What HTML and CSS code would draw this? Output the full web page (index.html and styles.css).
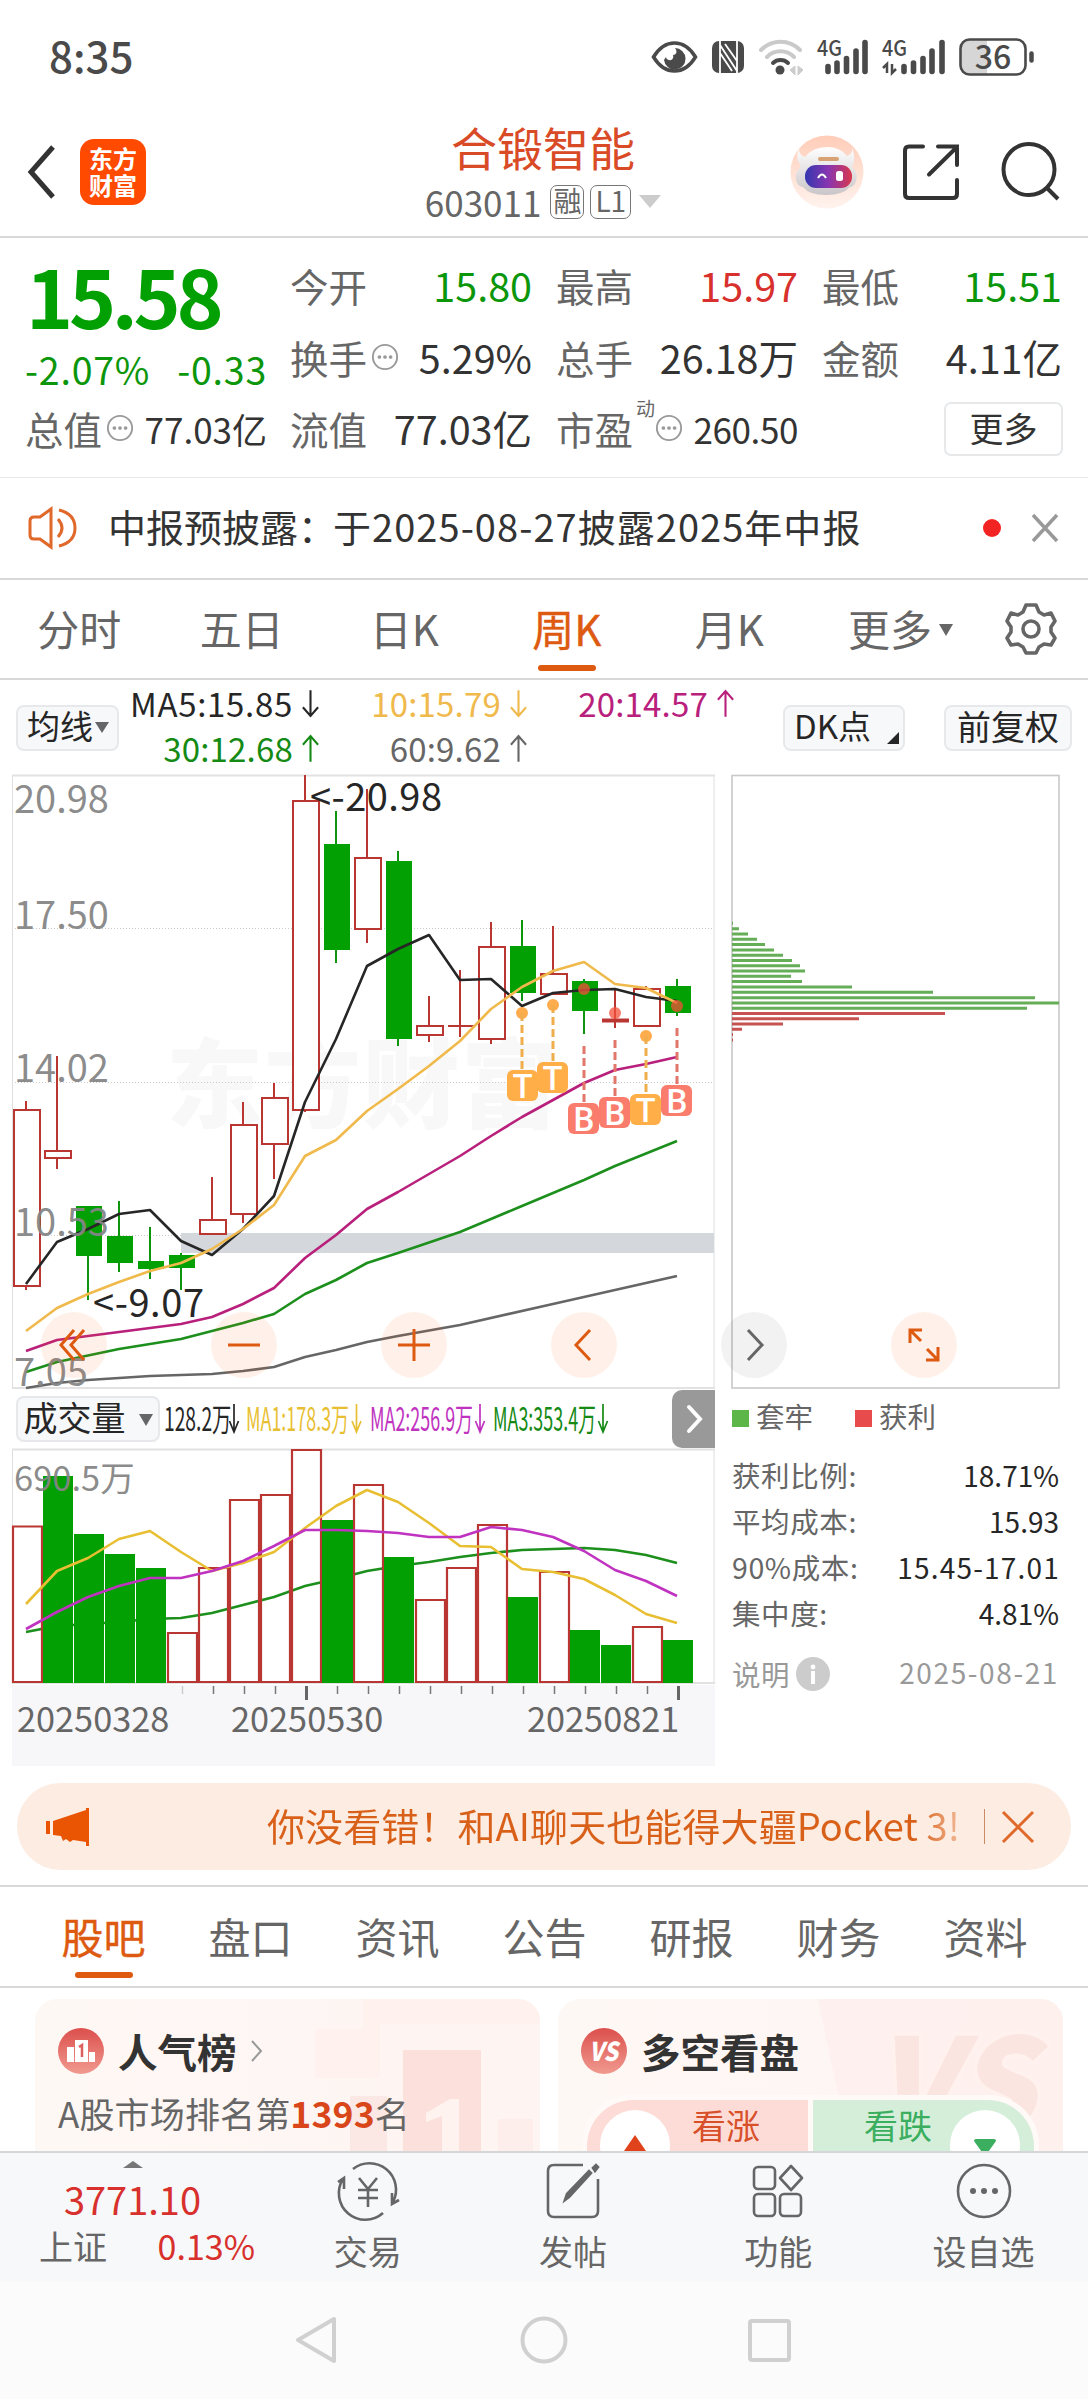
FILE: index.html
```html
<!DOCTYPE html>
<html lang="zh-CN">
<head>
<meta charset="utf-8">
<title>合锻智能 603011</title>
<link rel="stylesheet" href="styles.css">
</head>
<body>
<svg class="defs" width="0" height="0" aria-hidden="true">
  <symbol id="up" viewBox="0 0 20 30"><path d="M10 29V2M2 11L10 2l8 9" fill="none" stroke="currentColor" stroke-width="2.2"/></symbol>
  <symbol id="down" viewBox="0 0 20 30"><path d="M10 1v27M2 19l8 9 8-9" fill="none" stroke="currentColor" stroke-width="2.2"/></symbol>
  <symbol id="more" viewBox="0 0 30 30"><circle cx="15" cy="15" r="13" fill="none" stroke="#999" stroke-width="2"/><g fill="#999"><circle cx="9" cy="15" r="2"/><circle cx="15" cy="15" r="2"/><circle cx="21" cy="15" r="2"/></g></symbol>
</svg>

<div class="status">
  <span class="clock">8:35</span>
  <svg width="384" height="44" viewBox="652 35 384 44">
    <path d="M653.500 56C659 47 666 42 674.500 42s15.500 5 21 14c-5.500 9-12.500 14-21 14s-15.500-5-21-14z" fill="none" stroke="#4a4a4a" stroke-width="3.500"/>
    <path d="M675 47c3 4 1 7-2 7 1 3-1 6-4 5-1 0-3-1-3-3l-2 3a10.800 10.800 0 1 0 11-12z" fill="#4a4a4a"/>
    <rect x="712" y="40" width="32" height="32" rx="7" fill="#4a4a4a"/>
    <path d="M720 39V73M737 39V73M720 44L737 70M720 52L732 70M725 43L737 60" fill="none" stroke="#fff" stroke-width="1.800"/>
    <g fill="none" stroke-linecap="round" stroke-width="4">
      <path d="M761 49a27 27 0 0 1 39 0M767 56a19 19 0 0 1 27 0" stroke="#cacaca"/>
      <path d="M773 62a11 11 0 0 1 15 0" stroke="#4a4a4a"/>
    </g>
    <circle cx="780" cy="69" r="4.500" fill="#4a4a4a"/>
    <path d="M795 65v9l-5-5zM798 65v9l5-5z" fill="#ccc" stroke="#ccc"/>
    <g stroke="#4a4a4a" stroke-width="5.600" stroke-linecap="round">
      <path d="M828 65.500v5M837 62v8.500M846.500 57.500v13M856 50v20.500M865 41.500v29"/>
      <path d="M904 65.500v5M913.500 62v8.500M923 57.500v13M932 50v20.500M942 41.500v29"/>
    </g>
    <path d="M887 72V63l-4 4M892 63v9l4-4" fill="none" stroke="#4a4a4a" stroke-width="2.500"/>
    <g class="cjk" font-size="22" font-weight="500" fill="#4a4a4a">
      <text x="817" y="55" textLength="25" lengthAdjust="spacingAndGlyphs">4G</text>
      <text x="882" y="55" textLength="25" lengthAdjust="spacingAndGlyphs">4G</text>
    </g>
    <path d="M961 47q0-8 8-8h18v34h-18q-8 0-8-8z" fill="#d6d6d6"/>
    <rect x="960.500" y="38.500" width="65" height="35" rx="9" fill="none" stroke="#4a4a4a" stroke-width="2.600"/>
    <path d="M1031.500 52.500v7" stroke="#4a4a4a" stroke-width="4.500" stroke-linecap="round"/>
    <text class="cjk" x="993" y="67.500" font-size="32" font-weight="500" fill="#4a4a4a" text-anchor="middle">36</text>
  </svg>
</div>

<header class="top">
  <svg width="28" height="56" viewBox="0 0 28 56"><path d="M26 3L4 28l22 25" fill="none" stroke="#333" stroke-width="5"/></svg>
  <div class="logo"><span>东方</span><span>财富</span></div>
  <div class="title">
    <h1>合锻智能</h1>
    <div class="code">603011<i>融</i><i>L1</i><b></b></div>
  </div>
  <svg class="tools" width="276" height="80" viewBox="788 132 276 80">
    <defs>
      <linearGradient id="halo" x2="0" y2="1"><stop stop-color="#ffcdb8"/><stop offset="1" stop-color="#fff3ee"/></linearGradient>
      <linearGradient id="shell" x2="0" y2="1"><stop stop-color="#fff"/><stop offset="1" stop-color="#c9c5c8"/></linearGradient>
      <linearGradient id="visor"><stop stop-color="#3338b0"/><stop offset=".5" stop-color="#8a35b0"/><stop offset="1" stop-color="#d8384c"/></linearGradient>
    </defs>
    <circle cx="827" cy="172" r="36.500" fill="url(#halo)"/>
    <path d="M799 149q0 6 6 8 8-10 22-10 13 0 20 9 6-2 5-8 4 9 1 17-2 3 2 5 3 5 1 11-2 6-6 6-7 8-24 8t-23-8q-5 0-7-7-1-7 3-11 3-3-1-8-2-7 1-12z" fill="url(#shell)"/>
    <rect x="818" y="157" width="21" height="4" rx="2" fill="#d9a274"/>
    <rect x="805" y="165" width="47" height="23" rx="11" fill="url(#visor)"/>
    <path d="M818 178q4-7 8 0" fill="none" stroke="#fff" stroke-width="2"/><rect x="836" y="171" width="7" height="10" rx="2.500" fill="#fff"/>
    <path d="M923 146.500H909q-4 0-4 4V194q0 4 4 4h44q4 0 4-4V180M938 146.500H957V165M957 147L929 174.500" fill="none" stroke="#333" stroke-width="4" stroke-linecap="round"/>
    <circle cx="1029" cy="169.500" r="25.500" fill="none" stroke="#333" stroke-width="4"/><path d="M1047 188l11 11" stroke="#333" stroke-width="4"/>
  </svg>
</header>

<section class="quote">
  <div class="price"><strong>15.58</strong><p><span>-2.07%</span><span>-0.33</span></p></div>
  <dl class="c1"><dt>今开</dt><dd class="g">15.80</dd><dt>换手<svg width="28" height="28"><use href="#more"/></svg></dt><dd>5.29%</dd></dl>
  <dl class="c2"><dt>最高</dt><dd class="r">15.97</dd><dt>总手</dt><dd>26.18万</dd></dl>
  <dl class="c3"><dt>最低</dt><dd class="g">15.51</dd><dt>金额</dt><dd>4.11亿</dd></dl>
  <dl class="c0"><dt>总值<svg width="28" height="28"><use href="#more"/></svg></dt><dd class="small">77.03亿</dd></dl>
  <dl class="c1"><dt>流值</dt><dd>77.03亿</dd></dl>
  <dl class="c2"><dt>市盈<sup>动</sup><svg width="28" height="28"><use href="#more"/></svg></dt><dd class="small">260.50</dd></dl>
  <button class="more">更多</button>
</section>

<section class="notice">
  <svg width="50" height="44" viewBox="0 0 50 44"><g fill="none" stroke="#e0682a" stroke-width="3"><path d="M23 3v38L12 33H6q-4 0-4-4V15q0-4 4-4h6z"/><path d="M30 13q8 9 0 18M31 4q16 4 16 18T31 40"/></g></svg>
  <p><span>中报预披露：</span>于2025-08-27披露2025年中报</p>
  <i></i>
  <svg width="28" height="30" viewBox="0 0 28 30"><path d="M2 2l24 26M26 2L2 28" stroke="#999" stroke-width="3.500"/></svg>
</section>

<nav class="period">
  <span>分时</span><span>五日</span><span>日K</span><span class="on">周K</span><span>月K</span><span>更多<b></b></span>
  <svg width="52" height="54" viewBox="-26 -27 52 54"><path d="M-5-24H5L8-17 13-14 20-16 24-8 20-2V3L24 9 20 16 13 15 8 18 5 24H-5L-8 18-13 15-20 16-24 9-20 3V-2L-24-8-20-16-13-14-8-17Z" fill="none" stroke="#666" stroke-width="3.600" stroke-linejoin="round"/><circle r="8" fill="none" stroke="#666" stroke-width="3.600"/></svg>
</nav>

<section class="ma">
  <button>均线<b></b></button>
  <div class="vals">
    <span class="k">MA5:15.85<svg><use href="#down"/></svg></span><span class="y">10:15.79<svg><use href="#down"/></svg></span><span class="m">20:14.57<svg><use href="#up"/></svg></span>
    <span class="gr">30:12.68<svg><use href="#up"/></svg></span><span class="gy">60:9.62<svg><use href="#up"/></svg></span>
  </div>
  <button class="dk">DK点<b></b></button>
  <button class="fq">前复权</button>
</section>

<section class="charts">
  <div class="left">
    <svg class="block" width="722" height="616" viewBox="0 775 722 616">
      <text class="cjk" x="166" y="1121" font-size="97" font-weight="900" fill="#f8f8f9" textLength="392">东方财富</text>
      <path d="M12 929.500H714M12 1083.500H714M12 1236.500H714" stroke="#ccc" stroke-dasharray="1 2"/>
      <path d="M12.500 776V1389M714 776V1389" stroke="#dedede"/><path d="M12 776.500H715M12 1389H715" stroke="#e2e2e2" stroke-width="2"/>
      <rect x="181" y="1234" width="533" height="20" fill="#d4d7dc"/>
      <g fill="none" stroke="#b93632" stroke-width="2">
        <path d="M26 1102V1111M26 1287V1291M57 1057V1152M57 1159V1170M212 1178V1221M243 1103V1126M243 1215V1224M274 1084V1099M274 1145V1180M305 776V802M305 1111V1113M367 790V859M367 930V944M429 997V1027M429 1036V1043M460 971V1038M448 1027H474M491 923V948M491 1040V1045M553 927V975M615 990V1029M646 987V990"/>
        <path fill="#fff" d="M14 1111h26v176h-26zM45 1152h26v7h-26zM200 1221h26v14h-26zM231 1126h26v89h-26zM262 1099h26v46h-26zM293 802h26v309h-26zM355 859h26v71h-26zM417 1027h26v9h-26zM479 948h26v92h-26zM541 975h26v20h-26zM634 990h26v37h-26z"/>
        <path d="M602 1021.500h27" stroke-width="4"/>
      </g>
      <path stroke="#0d960d" stroke-width="2" d="M88 1207V1301M119 1202V1273M150 1228V1280M181 1254V1291M336 812V964M398 852V1047M522 921V1002M584 980V1035M677 980V1017"/>
      <path fill="#02a002" d="M76 1207h26v50h-26zM107 1237h26v27h-26zM138 1262h26v8h-26zM169 1256h26v13h-26zM324 845h26v106h-26zM386 862h26v178h-26zM510 947h26v47h-26zM572 982h26v30h-26zM665 987h26v27h-26z"/>
      <g fill="none" stroke-width="2.600" stroke-linejoin="round">
        <path stroke="#666" d="M26 1389L57 1384 88 1381 150 1377 212 1375 243 1372 274 1368 305 1358 336 1351 367 1343 398 1337 460 1326 544 1307 677 1277"/>
        <path stroke="#1c8f1c" d="M26 1373L57 1363 119 1350 150 1345 181 1340 212 1332 243 1324 274 1315 305 1295 336 1281 367 1264 398 1254 460 1233 491 1220 522 1207 584 1181 615 1167 677 1142"/>
        <path stroke="#b8207c" d="M26 1352L57 1341 88 1337 119 1333 150 1329 181 1325 212 1318 243 1305 274 1289 305 1259 336 1236 367 1210 398 1193 429 1175 460 1157 491 1137 522 1118 553 1101 584 1084 615 1071 646 1065 677 1058"/>
        <path stroke="#262626" d="M26 1285L57 1243 88 1230 119 1215 150 1211 181 1242 212 1256 243 1230 274 1197 305 1103 336 1040 367 967 398 950 429 936 460 981 491 980 522 1007 553 994 584 991 615 990 646 998 677 1002"/>
        <path stroke="#f0b94c" d="M26 1332L57 1309 88 1295 119 1283 150 1272 181 1264 212 1250 243 1230 274 1206 305 1157 336 1141 367 1112 398 1090 429 1067 460 1042 491 1010 522 988 553 972 584 963 615 985 646 989 677 1004"/>
      </g>
      <g fill="#ff9d2e" fill-opacity=".85"><circle cx="522" cy="1014" r="6"/><circle cx="553" cy="1006" r="6"/><circle cx="646" cy="1037" r="6"/></g>
      <g fill="#f4503a" fill-opacity=".75"><circle cx="584" cy="990" r="6"/><circle cx="615" cy="1014" r="6"/><circle cx="677" cy="1007" r="6"/></g>
      <g fill="none" stroke-width="3" stroke-dasharray="8 4"><path stroke="#f0ad4c" d="M522 1014V1071M553 1006V1063M646 1037V1094"/><path stroke="#e2766a" d="M584 1047V1103M615 1041V1097M677 1029V1085"/></g>
      <g fill="#ffae48"><rect x="507" y="1071" width="31" height="31" rx="6"/><rect x="537" y="1063" width="31" height="31" rx="6"/><rect x="630" y="1095" width="31" height="31" rx="6"/></g>
      <g fill="#fa7c6d"><rect x="568" y="1104" width="31" height="31" rx="6"/><rect x="599" y="1098" width="31" height="31" rx="6"/><rect x="661" y="1086" width="31" height="31" rx="6"/></g>
      <g font-family="Roboto, sans-serif" font-size="33" font-weight="500" fill="#fff" text-anchor="middle"><text x="522.500" y="1098.500">T</text><text x="552.500" y="1090.500">T</text><text x="645.500" y="1122.500">T</text><text x="584" y="1131.500">B</text><text x="615" y="1125.500">B</text><text x="677" y="1113.500">B</text></g>
      <g class="cjk" font-size="38" fill="#858585" fill-opacity=".95"><text x="14" y="814">20.98</text><text x="14" y="930">17.50</text><text x="14" y="1083">14.02</text><text x="14" y="1237">10.53</text><text x="14" y="1387">7.05</text></g>
      <g class="cjk" font-size="38" fill="#262626"><text x="310" y="812" textLength="132">&lt;-20.98</text><text x="93" y="1318" textLength="111">&lt;-9.07</text></g>
    </svg>
    <div class="volbar">
      <button>成交量<b></b></button>
      <svg width="450" height="58" viewBox="162 1391 450 58">
        <g class="cjk" font-size="32">
          <text x="164" y="1432" fill="#262626" textLength="75" lengthAdjust="spacingAndGlyphs">128.2万&#8201;&#8201;</text>
          <text x="246" y="1432" fill="#e8bf33" textLength="103" lengthAdjust="spacingAndGlyphs">MA1:178.3万</text>
          <text x="370" y="1432" fill="#c033c0" textLength="103" lengthAdjust="spacingAndGlyphs">MA2:256.9万</text>
          <text x="493" y="1432" fill="#158a15" textLength="103" lengthAdjust="spacingAndGlyphs">MA3:353.4万</text>
        </g>
        <g fill="none" stroke-width="1.700"><path stroke="#262626" d="M234 1405v28M229.500 1422l4.500 11 4.500-11"/><path stroke="#e8bf33" d="M356.500 1405v28M352 1422l4.500 11 4.500-11"/><path stroke="#c033c0" d="M480 1405v28M475.500 1422l4.500 11 4.500-11"/><path stroke="#158a15" d="M603 1405v28M598.500 1422l4.500 11 4.500-11"/></g>
      </svg>
      <button class="next"><svg width="18" height="30" viewBox="0 0 18 30"><path d="M3 3l11 12L3 27" fill="none" stroke="#fff" stroke-width="4" stroke-linecap="round"/></svg></button>
    </div>
    <svg class="block" width="722" height="318" viewBox="0 1449 722 318">
      <path d="M12.500 1450V1684M714 1450V1684" stroke="#dedede"/><path d="M12 1450.500H715M12 1684H715" stroke="#e2e2e2" stroke-width="2"/>
      <path fill="none" stroke="#1c8f1c" stroke-width="2.600" d="M26 1633L57 1627 88 1625 119 1623 150 1620 181 1619 212 1614 243 1606 274 1598 305 1587 336 1580 367 1572 398 1567 429 1563 460 1558 491 1554 522 1551 553 1550 584 1549 615 1551 646 1556 677 1564"/>
      <path fill="none" stroke="#b93632" stroke-width="2.200" d="M13 1527.500h29v155.500h-29zM168 1634h29v49h-29zM199 1569h29v114h-29zM230 1501h29v182h-29zM261 1496h29v187h-29zM292 1451h29v232h-29zM354 1486h29v197h-29zM416 1601h29v82h-29zM447 1569h29v114h-29zM478 1526h29v157h-29zM540 1573h29v110h-29zM633 1628h29v55h-29z"/>
      <path fill="#02a002" d="M43 1477h30v207h-30zM74 1535h30v149h-30zM105 1555h30v129h-30zM136 1569h30v115h-30zM322 1521h31v163h-31zM384 1558h30v126h-30zM508 1598h30v86h-30zM570 1631h30v53h-30zM601 1646h30v38h-30zM663 1641h30v43h-30z"/>
      <g fill="none" stroke-width="2.600" stroke-linejoin="round">
        <path stroke="#e8bf33" d="M26 1605L57 1572 88 1559 119 1540 150 1532 181 1553 212 1572 243 1564 274 1553 305 1529 336 1507 367 1491 398 1503 429 1524 460 1547 491 1548 522 1570 553 1573 584 1580 615 1596 646 1615 677 1624"/>
        <path stroke="#c033c0" d="M26 1630L57 1613 88 1598 119 1587 150 1579 181 1579 212 1572 243 1562 274 1547 305 1531 336 1531 367 1532 398 1534 429 1538 460 1538 491 1528 522 1531 553 1538 584 1552 615 1571 646 1582 677 1597"/>
      </g>
      <text class="cjk" x="14" y="1492" font-size="34.500" fill="#858585" fill-opacity=".95">690.5万</text>
      <rect x="12" y="1686" width="703" height="81" fill="#f7f7f9"/>
      <path d="M182.500 1687v8" stroke="#ccc" stroke-width="1.500"/>
      <path d="M213.500 1687v8M244.500 1687v8M275.500 1687v8M337.500 1687v8M368.500 1687v8M399.500 1687v8M430.500 1687v8M461.500 1687v8M492.500 1687v8M523.500 1687v8M554.500 1687v8M585.500 1687v8M616.500 1687v8M647.500 1687v8" stroke="#777" stroke-width="1.500"/>
      <path d="M306.500 1687v14M678.500 1687v14" stroke="#666" stroke-width="3"/>
      <g class="cjk" font-size="34.300" fill="#666"><text x="17" y="1733">20250328</text><text x="231" y="1733">20250530</text><text x="527" y="1733">20250821</text></g>
    </svg>
  </div>
  <div class="right">
    <svg class="block" width="340" height="616" viewBox="722 775 340 616">
      <rect x="732" y="776.500" width="327" height="612.500" fill="none" stroke="#c8c8c8" stroke-width="1.600"/>
      <path stroke="#65ad57" stroke-width="3" d="M732 924.300h1M732 929.700h7M732 935h16M732 940.300h25M732 945.600h33M732 950.900h42M732 956.200h51M732 961.500h60M732 966.800h68M732 972h73M732 977.300h59M732 982.600h70M732 988h120M732 993.300h201M732 998.700h303M732 1004h327M732 1009.300h295"/>
      <path stroke="#c65350" stroke-width="3" d="M732 1014.500h213M732 1019.700h127M732 1025h51M732 1030.300h10M732 1035.600h1M732 1041h1"/>
    </svg>
    <div class="legend"><i class="lg"></i><span>套牢</span><i class="lr"></i><span>获利</span></div>
    <div class="cost">
      <p><span>获利比例:</span><b>18.71%</b></p>
      <p><span>平均成本:</span><b>15.93</b></p>
      <p><span>90%成本:</span><b class="wide">15.45-17.01</b></p>
      <p><span>集中度:</span><b>4.81%</b></p>
      <p class="note"><span>说明<svg width="34" height="34"><circle cx="17" cy="17" r="17" fill="#ccc"/><circle cx="17" cy="10" r="2.400" fill="#fff"/><path d="M17 14v13" stroke="#fff" stroke-width="4"/></svg></span><b class="wide">2025-08-21</b></p>
    </div>
  </div>
  <div class="ctrls">
    <i><svg viewBox="-33 -33 66 66"><path d="M0-15L-13 0 0 15M10-15L-3 0 10 15"/></svg></i>
    <i><svg viewBox="-33 -33 66 66"><path d="M-16 0H16"/></svg></i>
    <i><svg viewBox="-33 -33 66 66"><path d="M-16 0H16M0-16V16"/></svg></i>
    <i><svg viewBox="-33 -33 66 66"><path d="M6-15L-8 0 6 15"/></svg></i>
    <i class="off"><svg viewBox="-33 -33 66 66"><path d="M-6-15L8 0-6 15"/></svg></i>
    <i><svg viewBox="-33 -33 66 66"><path d="M-2-15H-14V-2M-14-15L-3-4M2 15H14V2M14 15L3 4"/></svg></i>
  </div>
</section>

<section class="promo">
  <svg width="44" height="40" viewBox="0 0 44 40"><path d="M0 14h4v13H0zM7 14L40 3V1h3v38h-3v-4l-13-2-3 2-4-3-3 2-2-5-8-1z" fill="#ea5504"/></svg>
  <p>你没看错！和AI聊天也能得大疆Pocket 3!</p>
  <i></i>
  <svg width="34" height="34" viewBox="0 0 34 34"><path d="M2 2l30 30M32 2L2 32" stroke="#e0682a" stroke-width="3"/></svg>
</section>

<nav class="tabs"><span class="on">股吧</span><span>盘口</span><span>资讯</span><span>公告</span><span>研报</span><span>财务</span><span>资料</span></nav>

<section class="cards">
  <article>
    <svg class="deco" width="505" height="152" viewBox="35 2000 505 152"><g fill="#fdeeeb"><path d="M363 2000h177v25H380v54h-65v-49h48z" opacity=".6"/><path d="M403 2051h78v101h-78z" fill="#fbe0dc"/><path d="M350 2097h37v55h-37z" fill="#fae3df" opacity=".8"/><path d="M498 2120h35v32h-35z"/></g><path d="M426 2114l24-14h9v52h-17v-35l-16 6z" fill="#fff3f0"/></svg>
    <h2><svg width="46" height="46" viewBox="0 0 46 46"><defs><linearGradient id="red" x2="0" y2="1"><stop stop-color="#dc4f4c"/><stop offset="1" stop-color="#f09a90"/></linearGradient></defs><circle cx="23" cy="23" r="23" fill="url(#red)"/><path d="M9 19h7v15H9zM17 12h13v22H17zM31 24h6v10h-6z" fill="#fff"/><path d="M21 19l3-2v12" stroke="#dc605b" stroke-width="2.500" fill="none"/></svg>人气榜<svg width="12" height="24" viewBox="0 0 12 24"><path d="M1 2l9 10-9 10" fill="none" stroke="#999" stroke-width="2"/></svg></h2>
    <p>A股市场排名第<b>1393</b>名</p>
  </article>
  <article>
    <svg class="deco" width="505" height="152" viewBox="558 2000 505 152"><path d="M818 2000h245v152H850z" fill="#fdeeeb" opacity=".7"/><text class="cjk" x="872" y="2132" font-size="128" font-weight="900" font-style="italic" fill="#fbe5e1" stroke="#fff1ee" stroke-width="8" paint-order="stroke">VS</text></svg>
    <h2><svg width="46" height="46" viewBox="0 0 46 46"><circle cx="23" cy="23" r="23" fill="url(#red)"/><text class="cjk" x="8" y="33" font-size="26" font-weight="900" font-style="italic" fill="#fff" textLength="29" lengthAdjust="spacingAndGlyphs">VS</text></svg>多空看盘</h2>
    <div class="vote">
      <div class="bull"><i><svg width="22" height="16" viewBox="0 0 22 16"><path d="M11 0l11 16H0z" fill="#e0431c"/></svg></i>看涨</div>
      <div class="bear">看跌<i><svg width="22" height="16" viewBox="0 0 22 16"><path d="M0 2q0-2 2-2h18q2 0 2 2L12 16h-2z" fill="#3cae5f"/></svg></i></div>
    </div>
  </article>
</section>

<footer>
  <div class="index"><b></b><strong>3771.10</strong><p><span>上证</span><em>0.13%</em></p></div>
  <div class="act"><svg width="64" height="60" viewBox="-32 -30 64 60"><path d="M-15-22A26.500 26.500 0 0 1 25 11M15 22A26.500 26.500 0 0 1-25-12M-30-9L-24-13V-2M31 9L24 13V2"/><path d="M-9-13L0-2 9-13M0-2V16M-10-1H10M-10 7H10"/></svg>交易</div>
  <div class="act"><svg width="64" height="60" viewBox="-32 -30 64 60"><path d="M10-26H-19q-6 0-6 6V20q0 6 6 6H19q6 0 6-6V-12"/><path d="M-8 9L-6 3 16-20 18-18-4 6zM20-23l3-3 2 2-3 4z" fill="#666"/></svg>发帖</div>
  <div class="act"><svg width="64" height="60" viewBox="-32 -30 64 60"><rect x="-24" y="-24" width="21" height="22" rx="4"/><rect x="-24" y="3" width="21" height="22" rx="4"/><rect x="2" y="3" width="21" height="22" rx="4"/><path d="M13-25L24-13 13-1 2-13z" stroke-linejoin="round"/></svg>功能</div>
  <div class="act"><svg width="64" height="60" viewBox="-32 -30 64 60"><circle r="26"/><g fill="#666" stroke="none"><circle cx="-11" r="3"/><circle r="3"/><circle cx="11" r="3"/></g></svg>设自选</div>
</footer>
<div class="sysnav">
  <svg width="500" height="52" viewBox="294 2315 500 52"><g fill="none" stroke="#d0d0d0" stroke-width="4" stroke-linejoin="round"><path d="M334 2320V2362L298 2341z"/><circle cx="544" cy="2341" r="21.500"/><rect x="750" y="2322" width="39" height="39" rx="2"/></g></svg>
</div>
</body>
</html>
```
FILE: styles.css
```css
* { box-sizing: border-box; margin: 0; padding: 0; }
body {
  width: 1088px; height: 2400px; overflow: hidden; background: #fff; color: #333;
  font-family: "Noto Sans CJK SC", "Noto Sans", sans-serif; font-size: 34px; line-height: 1;
}
.cjk { font-family: "Noto Sans CJK SC", sans-serif; }
.defs { display: block; }
i, em { font-style: normal; }
h1, h2, b { font-weight: 400; }
svg { flex: none; overflow: visible; }
.block { display: block; }
button { font: inherit; color: inherit; border: 0; background: none; white-space: nowrap; }

/* status bar */
.status { height: 115px; display: flex; justify-content: space-between; align-items: center; padding: 0 52px 0 49px; color: #4a4a4a; }
.clock { font-size: 42px; font-weight: 500; padding-bottom: 5px; }

/* title bar */
.top { height: 123px; display: flex; align-items: center; padding: 0 24px 7px 27px; border-bottom: 2px solid #d8d8d8; }
.logo {
  width: 66px; height: 66px; margin-left: 25px; border-radius: 14px; background: #ff4a00; color: #fff;
  font-size: 24px; font-weight: 700; display: flex; flex-direction: column; align-items: center; justify-content: center; gap: 3px; padding-bottom: 2px;
}
.title { flex: 1; display: flex; flex-direction: column; align-items: center; padding-left: 152px; }
.title h1 { font-size: 46px; line-height: 58px; color: #d94a26; margin: -4px 0 5px; }
.code { display: flex; align-items: center; gap: 6px; height: 44px; font-size: 35px; color: #666; }
.code i { height: 34px; border: 1.5px solid #777; border-radius: 7px; font-size: 28px; line-height: 28px; padding: 0 2px; }
.code i:first-of-type { margin-left: 3px; }
.code i:nth-of-type(2) { padding: 0 4px; }
.code b { border: 11px solid transparent; border-top: 13px solid #ccc; border-bottom: 0; margin-left: 2px; }

/* quote summary */
.quote {
  height: 240px; display: grid; grid-template-columns: 265px 266px 266px 239px; grid-template-rows: 143px 74px;
  padding: 11px 25px 0 25px; border-bottom: 1px solid #e8e8e8;
}
.quote dl { display: grid; grid-template-columns: auto 1fr; grid-auto-rows: 72px; align-items: center; width: 242px; }
.quote .c0, .quote .price { grid-column: 1; }
.quote dt { font-size: 38.5px; color: #666; display: flex; align-items: center; }
.quote dt svg { margin-left: 4px; }
.quote dt sup { font-size: 19px; align-self: flex-start; margin: -11px -4px 0 3px; }
.quote dd { font-size: 39.5px; text-align: right; white-space: nowrap; }
.quote dd.small { font-size: 35px; }
.quote .c2 dd.small { letter-spacing: -.4px; }
.quote .g { color: #0c960c; }
.quote .r { color: #d8302c; }
.quote .c3 { width: 240px; }
.price { color: #02a002; width: 242px; }
.price strong { display: block; font-size: 80px; line-height: 90px; font-weight: 700; letter-spacing: -4.3px; padding: 0 0 0 1px; }
.price p { display: flex; justify-content: space-between; font-size: 37.5px; line-height: 44px; color: #0c960c; padding-top: 8px; letter-spacing: .8px; }
.more { width: 119px; height: 54px; border: 2px solid #e6e8ea; border-radius: 7px; font-size: 34px; justify-self: end; align-self: center; margin-right: -2px; padding-bottom: 3px; line-height: 1; }

/* disclosure notice */
.notice { height: 102px; display: flex; align-items: center; padding: 0 29px 0 28px; border-bottom: 2px solid #d8d8d8; }
.notice p { font-size: 38px; margin-left: 30px; flex: 1; padding-bottom: 5px; letter-spacing: 1.05px; white-space: nowrap; }
.notice p span { letter-spacing: 0; margin-right: -3px; }
.notice i { width: 18px; height: 18px; border-radius: 50%; background: #f22323; margin-right: 30px; }

/* period tabs */
.period { height: 100px; display: flex; align-items: center; padding: 0 31px 0 0; border-bottom: 2px solid #d8d8d8; font-size: 42px; color: #666; }
.period span { width: 162.5px; height: 100px; line-height: 97px; text-align: center; position: relative; left: -2px; }
.period span:nth-child(6) { width: 180px; }
.period span b { display: inline-block; border: 7px solid transparent; border-top: 12px solid #666; border-bottom: 0; vertical-align: 10px; margin-left: 7px; }
.period svg { margin-left: auto; }
.on { color: #dd5a10; -webkit-text-stroke: .4px #dd5a10; }
.on::after { content: ""; position: absolute; bottom: 8px; left: 50%; margin-left: -29px; width: 58px; height: 6px; border-radius: 3px; background: #dd5a10; }

/* moving averages */
.ma { height: 94px; display: flex; align-items: center; padding: 1px 16px 0; font-size: 33px; color: #262626; }
.ma button, .volbar button { height: 46px; border: 2px solid #e6e8ec; border-radius: 8px; background: #f7f8fa; padding-bottom: 4px; line-height: 1; }
.ma button:first-child { width: 103px; }
.ma button b, .volbar button b { display: inline-block; border: 7px solid transparent; border-top: 11px solid #666; border-bottom: 0; vertical-align: 6px; margin-left: 2px; }
.ma button:first-child b { margin-right: -1px; }
.vals { display: grid; grid-template-columns: 201px 208px 207px 1fr; grid-template-rows: 45px 45px; width: 664px; letter-spacing: .2px; }
.vals span { display: flex; justify-content: flex-end; align-items: center; gap: 8px; padding-bottom: 3px; }
.vals span:nth-child(4) { grid-column: 1; }
.vals svg { width: 19px; height: 29px; }
.vals .k { letter-spacing: .7px; }
.k { color: #262626; } .y { color: #f0b94c; } .m { color: #b8207c; } .gr { color: #158a15; } .gy { color: #666; }
.ma .dk { width: 122px; margin-right: 39px; position: relative; text-align: left; padding-left: 9px; }
.ma .dk b { position: absolute; right: 4px; bottom: 5px; margin: 0; border: 0; border-left: 12px solid transparent; border-bottom: 12px solid #262626; }
.ma .fq { width: 128px; font-size: 34px; }

/* charts */
.charts { display: flex; height: 992px; position: relative; }
.left { width: 722px; }
.volbar { height: 58px; display: flex; align-items: center; padding-left: 16px; width: 715px; }
.volbar button:first-child { width: 144px; font-size: 34px; color: #262626; }
.volbar button b { margin-left: 13px; border-width: 12px 7px 0; vertical-align: 5px; }
.volbar svg { margin-left: 2px; }
.volbar .next { width: 43px; height: 58px; margin-left: auto; border: 0; border-radius: 10px 0 0 10px; background: #999; display: flex; align-items: center; justify-content: center; padding: 0; }
.legend { display: flex; align-items: center; height: 56px; padding: 0 0 0 10px; font-size: 28.5px; color: #666; }
.legend i { width: 17px; height: 17px; margin-right: 7px; }
.legend span { padding-bottom: 3px; }
.lg { background: #5db648; }
.lr { background: #e84b4b; margin-left: 42px; }
.cost { padding: 8px 3px 0 10px; font-size: 28.5px; color: #666; }
.cost p { display: flex; justify-content: space-between; align-items: center; height: 45.8px; padding-bottom: 3px; white-space: nowrap; }
.cost p span { letter-spacing: .6px; }
.cost b { color: #262626; font-size: 28px; }
.cost .wide { letter-spacing: 1.2px; margin-right: -1px; }
.cost .note { color: #999; padding: 0; margin-top: 14px; }
.cost .note b { color: #999; padding: 0 1px 4px 0; letter-spacing: 1.6px; }
.note span { display: flex; align-items: center; gap: 6px; }
.ctrls { position: absolute; left: 41px; top: 538px; display: flex; gap: 104px; }
.ctrls i { width: 66px; height: 66px; border-radius: 50%; background: rgba(255, 98, 20, .09); }
.ctrls svg { display: block; fill: none; stroke: #dd5a10; stroke-width: 3; }
.ctrls .off { background: rgba(0, 0, 0, .05); }
.ctrls .off svg { stroke: #666; }

/* promotion strip */
.promo { margin: 17px 17px 15px; height: 87px; border-radius: 44px; background: #fcece2; display: flex; align-items: center; padding: 0 36px 0 29px; color: #dd5a10; }
.promo p {
  width: 700px; margin: 0 0 0 177px; padding-bottom: 4px; font-size: 38px; line-height: 50px; white-space: nowrap; letter-spacing: .1px;
  background: linear-gradient(90deg, #d96018 93%, #f5c8ae 100%); -webkit-background-clip: text; background-clip: text; color: transparent;
}
.promo i { width: 1px; height: 35px; background: #c98a66; margin: 0 16px 0 auto; }

/* content tabs */
.tabs { height: 103px; display: flex; border: solid #d8d8d8; border-width: 2px 0; padding-left: 30px; font-size: 42px; color: #666; }
.tabs span { width: 147px; text-align: center; line-height: 98px; position: relative; }

/* cards */
.cards { height: 163px; display: flex; gap: 18px; padding: 11px 25px 0 35px; overflow: hidden; }
article { width: 505px; height: 200px; flex: none; border-radius: 22px; background: linear-gradient(90deg, #fef8f5, #fef4f2); position: relative; overflow: hidden; padding: 29px 23px 0; }
.deco { position: absolute; inset: 0; }
h2 { position: relative; display: flex; align-items: center; height: 46px; gap: 14px; font-size: 39.5px; font-weight: 700; line-height: 40px; }
article p { position: relative; font-size: 35px; color: #666; margin-top: 19px; line-height: 40px; letter-spacing: .15px; }
article p b { color: #d8461a; font-weight: 700; font-size: 35.5px; }
.vote { position: relative; display: flex; gap: 5px; width: 457px; margin: 21px 0 0 1px; border: 5px solid #fffaf8; border-bottom: 0; border-radius: 50px 50px 0 0; background: #fffaf8; }
.vote div { flex: 1; height: 100px; display: flex; font-size: 34px; line-height: 44px; padding-top: 3px; }
.vote i { width: 70px; height: 70px; border-radius: 50%; background: #fff; margin-top: 7px; display: flex; justify-content: center; }
.bull { background: #fddcd8; color: #d8502a; border-radius: 46px 0 0 0; gap: 22px; padding-left: 13px; }
.bear { background: #d5eeda; color: #3cae5f; border-radius: 0 46px 0 0; gap: 18px; justify-content: flex-end; padding-right: 14px; }
.bull svg { margin-top: 25px; } .bear svg { margin-top: 29px; }

/* bottom bars */
footer { height: 131px; display: flex; border-top: 2px solid #d4d6d8; background: #f7f8fa; }
.index { width: 265px; text-align: center; position: relative; color: #d8302c; padding-top: 24px; }
.index b { position: absolute; left: 123px; top: 8px; border: 10px solid transparent; border-bottom: 7px solid #777; border-top: 0; }
.index strong { font-size: 38px; font-weight: 400; line-height: 44px; display: block; }
.index p { display: flex; justify-content: space-between; padding: 5px 10px 0 39px; line-height: 40px; }
.index span { color: #666; }
.act { width: 205.3px; display: flex; flex-direction: column; align-items: center; color: #666; padding-top: 8px; gap: 13px; }
.act svg { fill: none; stroke: #666; stroke-width: 2.6; }
.sysnav { height: 117px; background: #fbfbfb; display: flex; justify-content: center; padding-top: 32px; }
```
